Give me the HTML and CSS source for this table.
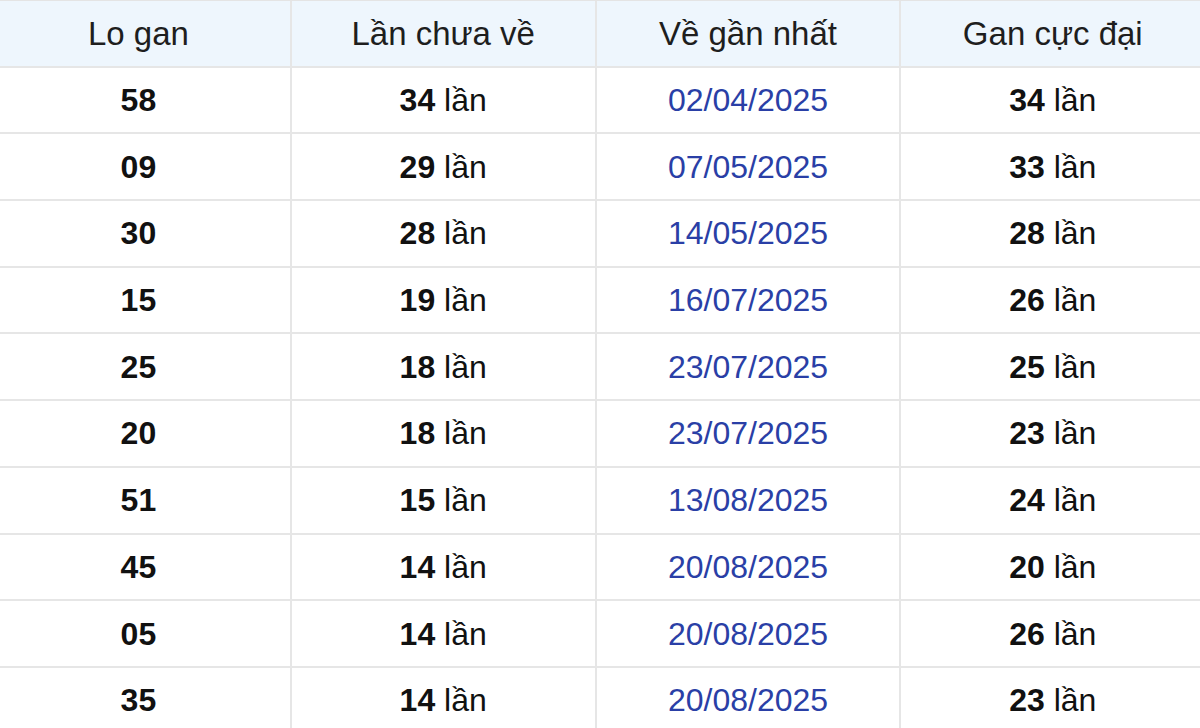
FILE: index.html
```html
<!DOCTYPE html>
<html lang="vi">
<head>
<meta charset="utf-8">
<title>Lo gan</title>
<link rel="stylesheet" href="styles.css">
</head>
<body>
<div class="table">
  <div class="cell head"><span>Lo gan</span></div>
  <div class="cell head"><span>Lần chưa về</span></div>
  <div class="cell head"><span>Về gần nhất</span></div>
  <div class="cell head"><span>Gan cực đại</span></div>

  <div class="cell"><span><b>58</b></span></div>
  <div class="cell"><span><b>34</b> lần</span></div>
  <div class="cell date"><span>02/04/2025</span></div>
  <div class="cell"><span><b>34</b> lần</span></div>

  <div class="cell"><span><b>09</b></span></div>
  <div class="cell"><span><b>29</b> lần</span></div>
  <div class="cell date"><span>07/05/2025</span></div>
  <div class="cell"><span><b>33</b> lần</span></div>

  <div class="cell"><span><b>30</b></span></div>
  <div class="cell"><span><b>28</b> lần</span></div>
  <div class="cell date"><span>14/05/2025</span></div>
  <div class="cell"><span><b>28</b> lần</span></div>

  <div class="cell"><span><b>15</b></span></div>
  <div class="cell"><span><b>19</b> lần</span></div>
  <div class="cell date"><span>16/07/2025</span></div>
  <div class="cell"><span><b>26</b> lần</span></div>

  <div class="cell"><span><b>25</b></span></div>
  <div class="cell"><span><b>18</b> lần</span></div>
  <div class="cell date"><span>23/07/2025</span></div>
  <div class="cell"><span><b>25</b> lần</span></div>

  <div class="cell"><span><b>20</b></span></div>
  <div class="cell"><span><b>18</b> lần</span></div>
  <div class="cell date"><span>23/07/2025</span></div>
  <div class="cell"><span><b>23</b> lần</span></div>

  <div class="cell"><span><b>51</b></span></div>
  <div class="cell"><span><b>15</b> lần</span></div>
  <div class="cell date"><span>13/08/2025</span></div>
  <div class="cell"><span><b>24</b> lần</span></div>

  <div class="cell"><span><b>45</b></span></div>
  <div class="cell"><span><b>14</b> lần</span></div>
  <div class="cell date"><span>20/08/2025</span></div>
  <div class="cell"><span><b>20</b> lần</span></div>

  <div class="cell"><span><b>05</b></span></div>
  <div class="cell"><span><b>14</b> lần</span></div>
  <div class="cell date"><span>20/08/2025</span></div>
  <div class="cell"><span><b>26</b> lần</span></div>

  <div class="cell"><span><b>35</b></span></div>
  <div class="cell"><span><b>14</b> lần</span></div>
  <div class="cell date"><span>20/08/2025</span></div>
  <div class="cell"><span><b>23</b> lần</span></div>
</div>
</body>
</html>
```
FILE: styles.css
```css
html, body {
  margin: 0;
  padding: 0;
  background: #ffffff;
  overflow: hidden;
}

body {
  font-family: "Liberation Sans", Arial, sans-serif;
  color: #111111;
}

.table {
  display: grid;
  grid-template-columns: repeat(4, 302.8px);
  grid-auto-rows: 64.7px;
  gap: 2px;
  padding: 0 2px 2px 2px;
  border-top: 1px solid #e4e4e4;
  background: #e6e6e6;
  margin-left: -15px;
  width: max-content;
}

.cell {
  background: #ffffff;
  display: flex;
  align-items: center;
  justify-content: center;
  font-size: 32px;
  padding-top: 1px;
  box-sizing: border-box;
  white-space: nowrap;
}

.cell b {
  font-weight: 700;
}

.head {
  background: #eef6fd;
  font-size: 33px;
  color: #1e1e1e;
  padding-top: 1px;
}

.date {
  color: #2a3fa6;
}
```
